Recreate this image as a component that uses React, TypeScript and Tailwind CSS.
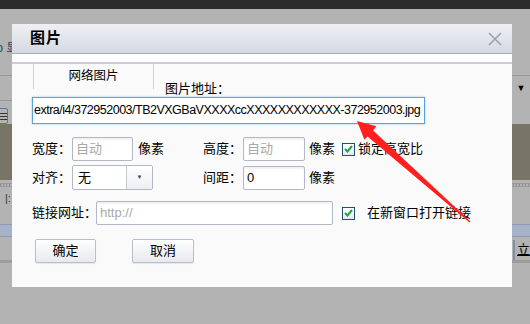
import React from "react";

const font = { fontFamily: '"Liberation Sans", "Noto Sans CJK SC", sans-serif' };

function Checkbox() {
  return (
    <span className="flex h-[13px] w-[13px] shrink-0 items-center justify-center border border-[#1f4e79] bg-gradient-to-b from-[#ffffff] to-[#e4e8ee]">
      <svg width="9" height="8" viewBox="0 0 9 8">
        <path d="M1 4 L3.5 6.5 L8 1" fill="none" stroke="#25a33a" strokeWidth="2" />
      </svg>
    </span>
  );
}

function TextInput({ w, value, placeholder }: { w: string; value?: string; placeholder?: string }) {
  return (
    <div
      className={`${w} flex h-[24px] shrink-0 items-center rounded-[2px] border border-[#b4b8c6] bg-white px-[3px] text-[13px] shadow-[inset_0_2px_2px_rgba(0,0,0,0.06)]`}
    >
      {value ? <span className="text-black">{value}</span> : <span className="text-[#a8a8a8]">{placeholder}</span>}
    </div>
  );
}

export default function App() {
  return (
    <div
      className="relative h-[324px] w-[530px] overflow-hidden whitespace-nowrap bg-[#b3b3b3] text-[13px] text-black"
      style={font}
    >
      {/* dimmed page behind the dialog */}
      <div className="flex h-full flex-col">
        <div className="h-[9px] shrink-0 bg-[#2b2b2b]" />
        <div className="flex h-[66px] shrink-0 items-center pt-[12px] text-[12px] text-[#2a3f66]">
          <span className="ml-[-3px]">ↄ 显</span>
        </div>
        <div className="flex h-[49px] shrink-0 border-t border-[#979797]">
          <div className="w-[12px]">
            <div className="mt-[24px] border-t border-[#979797]" />
            <div className="mt-[7px] ml-[-2px] flex h-[16px] w-[10px] items-center justify-center rounded-[2px] border border-[#5a78a8] text-[10px] text-[#333]">
              ☰
            </div>
          </div>
          <div className="flex-1" />
          <div className="w-[18px] pt-[8px] text-center text-[9px] leading-none">▼</div>
        </div>
        <div className="h-[56px] shrink-0 bg-[#787567]" />
        <div className="mt-[3px] h-[4px] shrink-0 border-y border-[#9a9a9a] bg-[repeating-linear-gradient(90deg,#8c8c8c_0_1px,transparent_1px_3px)]" />
        <div className="h-[6px] shrink-0" />
        <div className="h-[12px] shrink-0 pl-[5px] text-[11px] leading-none text-[#333]">|:</div>
        <div className="h-[19px] shrink-0" />
        <div className="h-[13px] shrink-0 border-y border-[#8e9bb0] bg-[#a5b2c7]" />
        <div className="flex h-[26px] shrink-0 border-b-[3px] border-[#9c9c9c]">
          <div className="flex-1" />
          <div className="mt-[3px] flex h-[20px] w-[17px] items-center border-l-2 border-[#7c90ac] pl-[2px] text-[13px] underline">
            立
          </div>
        </div>
        <div className="flex-1" />
      </div>

      {/* dialog */}
      <div className="absolute left-[12px] top-[24px] flex h-[263px] w-[500px] flex-col bg-[#fafafa]">
        <div className="flex h-[30px] shrink-0 items-center justify-between border-b border-[#a7aebb] bg-gradient-to-b from-[#eef0f4] to-[#d5d9e1] pl-[18px] pr-[9px]">
          <span className="text-[15px] font-bold tracking-[1px]">图片</span>
          <svg width="16" height="16" viewBox="0 0 16 16">
            <path d="M2 2 L14 14 M14 2 L2 14" stroke="#9ea2aa" strokeWidth="1.6" />
          </svg>
        </div>
        <div className="h-[10px] shrink-0 border-b-2 border-[#c9cdd7] bg-[#fdfdfd]" />
        <div className="flex h-[33px] shrink-0 items-start">
          <div className="ml-[21px] flex h-[25px] w-[121px] items-center justify-center border-x border-[#cdd1da] text-[12.5px]">
            网络图片
          </div>
          <span className="ml-[11px] mt-[17px] leading-[16px]">图片地址：</span>
        </div>
        <div className="ml-[20px] flex h-[27px] w-[393px] shrink-0 items-center overflow-hidden border border-[#5aa3da] bg-white pl-[1px] text-[12.5px] tracking-[-0.5px] shadow-[0_0_2px_rgba(90,163,218,0.6)]">
          extra/i4/372952003/TB2VXGBaVXXXXccXXXXXXXXXXXX-372952003.jpg
        </div>

        <div className="mt-[13px] flex items-center pl-[20px]">
          <span className="w-[40px]">宽度：</span>
          <TextInput w="w-[61px]" placeholder="自动" />
          <span className="ml-[5px] w-[65px]">像素</span>
          <span className="w-[40px]">高度：</span>
          <TextInput w="w-[62px]" placeholder="自动" />
          <span className="ml-[4px] w-[33px]">像素</span>
          <Checkbox />
          <span className="ml-[3px]">锁定高宽比</span>
        </div>

        <div className="mt-[4px] flex items-center pl-[20px]">
          <span className="w-[40px]">对齐：</span>
          <div className="flex h-[25px] w-[81px] shrink-0 items-stretch rounded-[2px] border border-[#b4b8c6] bg-white">
            <span className="flex w-[53px] items-center pl-[5px]">无</span>
            <span className="flex flex-1 items-center justify-center border-l border-[#c6cad4] bg-gradient-to-b from-[#ffffff] to-[#eceef2] text-[6px] text-[#444]">
              ▼
            </span>
          </div>
          <span className="w-[50px]" />
          <span className="w-[40px]">间距：</span>
          <TextInput w="w-[62px]" value="0" />
          <span className="ml-[4px]">像素</span>
        </div>

        <div className="mt-[11px] flex items-center pl-[20px]">
          <span className="w-[64px] shrink-0">链接网址：</span>
          <TextInput w="w-[237px]" placeholder="http://" />
          <span className="ml-[9px]">
            <Checkbox />
          </span>
          <span className="ml-[12px]">在新窗口打开链接</span>
        </div>

        <div className="mt-[14px] flex items-center pl-[23px]">
          <button className="h-[24px] w-[61px] rounded-[2px] border border-[#b9bec9] bg-gradient-to-b from-[#ffffff] to-[#e6e9ef] text-[13px] shadow-[0_1px_1px_rgba(0,0,0,0.08)]">
            确定
          </button>
          <button className="ml-[36px] h-[24px] w-[62px] rounded-[2px] border border-[#b9bec9] bg-gradient-to-b from-[#ffffff] to-[#e6e9ef] text-[13px] shadow-[0_1px_1px_rgba(0,0,0,0.08)]">
            取消
          </button>
        </div>
      </div>

      {/* red annotation arrow */}
      <svg className="pointer-events-none absolute left-0 top-0" width="530" height="324" viewBox="0 0 530 324">
        <polygon
          points="357,121 376.4,126.3 373.1,130.5 470.5,221.5 469.5,222.5 367.5,136.5 364.4,139.7"
          fill="#ff1f1f"
        />
      </svg>
    </div>
  );
}
